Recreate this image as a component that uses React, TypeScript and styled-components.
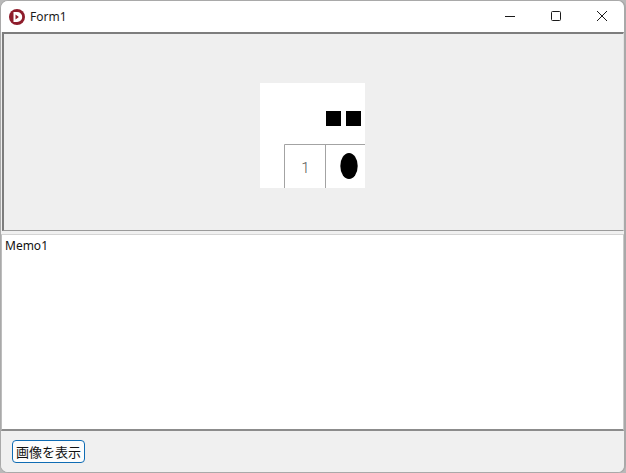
import React from "react";
import styled, { createGlobalStyle } from "styled-components";

const GlobalStyle = createGlobalStyle`
  html, body {
    margin: 0;
    padding: 0;
    width: 626px;
    height: 473px;
    overflow: hidden;
    background: #b9b9b9;
  }
`;

const Window = styled.div`
  box-sizing: border-box;
  width: 626px;
  height: 473px;
  display: flex;
  flex-direction: column;
  background: #f0f0f0;
  border: 1px solid #a9a9a9;
  border-right-width: 2px;
  border-radius: 8px;
  overflow: hidden;
  font-family: "Noto Sans CJK JP", "Liberation Sans", sans-serif;
`;

const TitleBar = styled.div`
  height: 31px;
  flex: none;
  display: flex;
  align-items: center;
  background: #fff;
`;

const AppIcon = styled.svg`
  width: 16px;
  height: 16px;
  margin-left: 8px;
`;

const Title = styled.span`
  margin-left: 5px;
  font: 12px "Noto Sans", sans-serif;
  color: #1a1a1a;
`;

const Caption = styled.div`
  margin-left: auto;
  display: flex;
  margin-right: -1px;
`;

const CaptionButton = styled.div`
  width: 46px;
  height: 31px;
  display: flex;
  align-items: center;
  justify-content: center;
  margin-top: -2px;
`;

const CaptionIcon = styled.svg`
  width: 12px;
  height: 12px;
  fill: none;
  stroke: #1a1a1a;
  stroke-width: 1;
`;

const ImagePanel = styled.div`
  box-sizing: border-box;
  height: 199px;
  flex: none;
  margin: 0 0 0 1px;
  display: flex;
  align-items: flex-start;
  justify-content: center;
  padding-top: 49px;
  padding-right: 2px;
  background: #efefef;
  border-style: solid;
  border-width: 2px 1px 1px 2px;
  border-color: #7d7d7d #e4e4e4 #9a9a9a #7d7d7d;
`;

const Bitmap = styled.svg`
  width: 105px;
  height: 105px;
  display: block;
  background: #fff;
`;

const CellLabel = styled.text`
  font: 300 15px Roboto, sans-serif;
  fill: #555;
  text-anchor: middle;
`;

const Memo = styled.div`
  box-sizing: border-box;
  height: 197px;
  flex: none;
  margin: 3px 0 0 0;
  padding: 3px 3px;
  background: #fff;
  border-style: solid;
  border-width: 1px 1px 2px 1px;
  border-color: #d4d4d4 #c9c9c9 #8c8c8c #bdbdbd;
  font: 12px/16px "Noto Sans", sans-serif;
  color: #111;
`;

const BottomBar = styled.div`
  flex: 1;
  display: flex;
  align-items: center;
  padding: 0 0 0 11px;
  background: #f0f0f0;
`;

const Button = styled.button`
  box-sizing: border-box;
  width: 73px;
  height: 23px;
  padding: 0;
  border: 1px solid #0f6cb4;
  border-radius: 4px;
  background: #fdfdfd;
  color: #111;
  font: 13px/19px "Noto Sans CJK JP", sans-serif;
`;

export default function App() {
  return (
    <>
      <GlobalStyle />
      <Window>
        <TitleBar>
          <AppIcon viewBox="0 0 16 16">
            <circle cx="8" cy="8" r="8" fill="#8e1c2b" />
            <path d="M4.5 3h3.7a5 5 0 0 1 0 10H4.5z" fill="#fff" />
            <path d="M6.5 5.5v5l3.4-2.5z" fill="#8e1c2b" />
          </AppIcon>
          <Title>Form1</Title>
          <Caption>
            <CaptionButton>
              <CaptionIcon viewBox="0 0 12 12">
                <path d="M1 6.5h10" />
              </CaptionIcon>
            </CaptionButton>
            <CaptionButton>
              <CaptionIcon viewBox="0 0 12 12">
                <rect x="1.5" y="1.5" width="9" height="9" rx="1" />
              </CaptionIcon>
            </CaptionButton>
            <CaptionButton>
              <CaptionIcon viewBox="0 0 12 12">
                <path d="M1 1l10 10M11 1L1 11" />
              </CaptionIcon>
            </CaptionButton>
          </Caption>
        </TitleBar>
        <ImagePanel>
          <Bitmap viewBox="0 0 105 105">
            <rect x="66" y="28" width="15" height="15" fill="#000" />
            <rect x="86" y="28" width="15" height="15" fill="#000" />
            <path d="M24.5 105V61.5H105M65.5 61.5V105" fill="none" stroke="#a3a3a3" />
            <ellipse cx="89" cy="83" rx="8.7" ry="13" fill="#000" />
            <CellLabel x="45.5" y="90">
              1
            </CellLabel>
          </Bitmap>
        </ImagePanel>
        <Memo>Memo1</Memo>
        <BottomBar>
          <Button>画像を表示</Button>
        </BottomBar>
      </Window>
    </>
  );
}
